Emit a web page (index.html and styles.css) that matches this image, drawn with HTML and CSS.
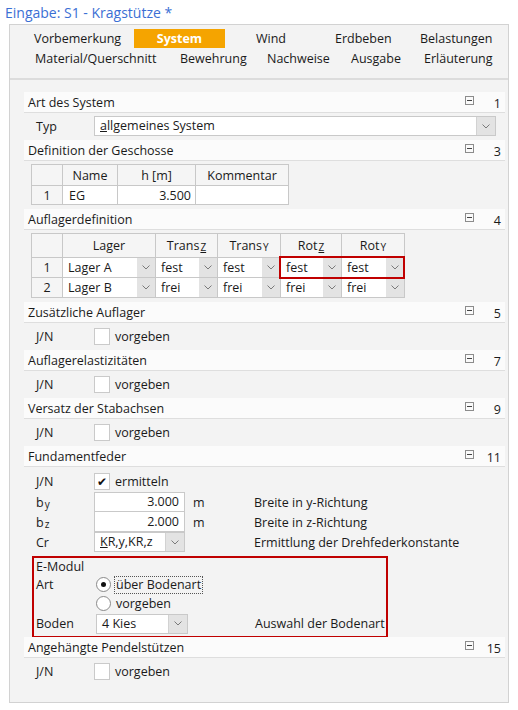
FILE: index.html
```html
<!DOCTYPE html>
<html lang="de">
<head>
<meta charset="utf-8">
<title>Eingabe: S1 - Kragstütze</title>
<link rel="stylesheet" href="styles.css">
</head>
<body>
<div class="title">Eingabe: S1 - Kragstütze *</div>
<div class="panel">
  <div class="tabs">
    <div class="tabrow r1">
      <span class="tab">Vorbemerkung</span>
      <span class="tab"><span class="active">System</span></span>
      <span class="tab">Wind</span>
      <span class="tab">Erdbeben</span>
      <span class="tab">Belastungen</span>
    </div>
    <div class="tabrow r2">
      <span class="tab">Material/Querschnitt</span>
      <span class="tab">Bewehrung</span>
      <span class="tab">Nachweise</span>
      <span class="tab">Ausgabe</span>
      <span class="tab">Erläuterung</span>
    </div>
  </div>
  <div class="content">
    <section class="sec first">
      <div class="sec-head"><span class="sec-title">Art des System</span><svg class="collapse" width="9" height="9" viewBox="0 0 9 9"><rect x="0.5" y="0.5" width="8" height="8" fill="#fafafa" stroke="#8c8c8c"/><path d="M2 4.5h5" stroke="#444"/></svg><span class="sec-num">1</span></div>
      <div class="sec-body">
        <div class="row"><span class="lbl">Typ</span>
          <div class="combo typ"><span class="val"><u>a</u>llgemeines System</span><span class="dd"><svg width="8" height="5" viewBox="0 0 8 5"><path d="M0.5 0.5L4 4L7.5 0.5" fill="none" stroke="#7a7a7a"/></svg></span></div>
        </div>
      </div>
    </section>

    <section class="sec">
      <div class="sec-head"><span class="sec-title">Definition der Geschosse</span><svg class="collapse" width="9" height="9" viewBox="0 0 9 9"><rect x="0.5" y="0.5" width="8" height="8" fill="#fafafa" stroke="#8c8c8c"/><path d="M2 4.5h5" stroke="#444"/></svg><span class="sec-num">3</span></div>
      <div class="sec-body">
        <table class="grid geschosse">
          <colgroup><col class="c-nr"><col class="c-name"><col class="c-h"><col class="c-komm"></colgroup>
          <tr class="hd"><th></th><th>Name</th><th>h [m]</th><th>Kommentar</th></tr>
          <tr class="dr"><td class="nr">1</td><td>EG</td><td class="num">3.500</td><td></td></tr>
        </table>
      </div>
    </section>

    <section class="sec">
      <div class="sec-head"><span class="sec-title">Auflagerdefinition</span><svg class="collapse" width="9" height="9" viewBox="0 0 9 9"><rect x="0.5" y="0.5" width="8" height="8" fill="#fafafa" stroke="#8c8c8c"/><path d="M2 4.5h5" stroke="#444"/></svg><span class="sec-num">4</span></div>
      <div class="sec-body">
        <div class="tablewrap">
          <table class="grid auflager">
            <colgroup><col class="c-nr"><col class="c-lager"><col class="c-dir"><col class="c-dir2"><col class="c-dir3"><col class="c-dir2"></colgroup>
            <tr class="hd"><th></th><th>Lager</th><th>Trans<span class="sub u">Z</span></th><th>Trans<span class="sub">Y</span></th><th>Rot<span class="sub u">Z</span></th><th>Rot<span class="sub">Y</span></th></tr>
            <tr class="dr"><td class="nr">1</td>
              <td><div class="cellsel"><span>Lager A</span><span class="dd"><svg width="8" height="5" viewBox="0 0 8 5"><path d="M0.5 0.5L4 4L7.5 0.5" fill="none" stroke="#7a7a7a"/></svg></span></div></td>
              <td><div class="cellsel"><span>fest</span><span class="dd"><svg width="8" height="5" viewBox="0 0 8 5"><path d="M0.5 0.5L4 4L7.5 0.5" fill="none" stroke="#7a7a7a"/></svg></span></div></td>
              <td><div class="cellsel"><span>fest</span><span class="dd"><svg width="8" height="5" viewBox="0 0 8 5"><path d="M0.5 0.5L4 4L7.5 0.5" fill="none" stroke="#7a7a7a"/></svg></span></div></td>
              <td><div class="cellsel"><span>fest</span><span class="dd"><svg width="8" height="5" viewBox="0 0 8 5"><path d="M0.5 0.5L4 4L7.5 0.5" fill="none" stroke="#7a7a7a"/></svg></span></div></td>
              <td><div class="cellsel"><span>fest</span><span class="dd"><svg width="8" height="5" viewBox="0 0 8 5"><path d="M0.5 0.5L4 4L7.5 0.5" fill="none" stroke="#7a7a7a"/></svg></span></div></td>
            </tr>
            <tr class="dr"><td class="nr">2</td>
              <td><div class="cellsel"><span>Lager B</span><span class="dd"><svg width="8" height="5" viewBox="0 0 8 5"><path d="M0.5 0.5L4 4L7.5 0.5" fill="none" stroke="#7a7a7a"/></svg></span></div></td>
              <td><div class="cellsel"><span>frei</span><span class="dd"><svg width="8" height="5" viewBox="0 0 8 5"><path d="M0.5 0.5L4 4L7.5 0.5" fill="none" stroke="#7a7a7a"/></svg></span></div></td>
              <td><div class="cellsel"><span>frei</span><span class="dd"><svg width="8" height="5" viewBox="0 0 8 5"><path d="M0.5 0.5L4 4L7.5 0.5" fill="none" stroke="#7a7a7a"/></svg></span></div></td>
              <td><div class="cellsel"><span>frei</span><span class="dd"><svg width="8" height="5" viewBox="0 0 8 5"><path d="M0.5 0.5L4 4L7.5 0.5" fill="none" stroke="#7a7a7a"/></svg></span></div></td>
              <td><div class="cellsel"><span>frei</span><span class="dd"><svg width="8" height="5" viewBox="0 0 8 5"><path d="M0.5 0.5L4 4L7.5 0.5" fill="none" stroke="#7a7a7a"/></svg></span></div></td>
            </tr>
          </table>
          <div class="highlight"></div>
        </div>
      </div>
    </section>

    <section class="sec">
      <div class="sec-head"><span class="sec-title">Zusätzliche Auflager</span><svg class="collapse" width="9" height="9" viewBox="0 0 9 9"><rect x="0.5" y="0.5" width="8" height="8" fill="#fafafa" stroke="#8c8c8c"/><path d="M2 4.5h5" stroke="#444"/></svg><span class="sec-num">5</span></div>
      <div class="sec-body">
        <div class="row"><span class="lbl">J/N</span><span class="check"></span><span class="chk-text">vorgeben</span></div>
      </div>
    </section>

    <section class="sec">
      <div class="sec-head"><span class="sec-title">Auflagerelastizitäten</span><svg class="collapse" width="9" height="9" viewBox="0 0 9 9"><rect x="0.5" y="0.5" width="8" height="8" fill="#fafafa" stroke="#8c8c8c"/><path d="M2 4.5h5" stroke="#444"/></svg><span class="sec-num">7</span></div>
      <div class="sec-body">
        <div class="row"><span class="lbl">J/N</span><span class="check"></span><span class="chk-text">vorgeben</span></div>
      </div>
    </section>

    <section class="sec">
      <div class="sec-head"><span class="sec-title">Versatz der Stabachsen</span><svg class="collapse" width="9" height="9" viewBox="0 0 9 9"><rect x="0.5" y="0.5" width="8" height="8" fill="#fafafa" stroke="#8c8c8c"/><path d="M2 4.5h5" stroke="#444"/></svg><span class="sec-num">9</span></div>
      <div class="sec-body">
        <div class="row"><span class="lbl">J/N</span><span class="check"></span><span class="chk-text">vorgeben</span></div>
      </div>
    </section>

    <section class="sec">
      <div class="sec-head"><span class="sec-title">Fundamentfeder</span><svg class="collapse" width="9" height="9" viewBox="0 0 9 9"><rect x="0.5" y="0.5" width="8" height="8" fill="#fafafa" stroke="#8c8c8c"/><path d="M2 4.5h5" stroke="#444"/></svg><span class="sec-num">11</span></div>
      <div class="sec-body fund">
        <div class="row tall"><span class="lbl">J/N</span><span class="check on">✔</span><span class="chk-text">ermitteln</span></div>
        <div class="frow"><span class="lbl">b<span class="sub">y</span></span><span class="input top">3.000</span><span class="unit">m</span><span class="desc">Breite in y-Richtung</span></div>
        <div class="frow"><span class="lbl">b<span class="sub">z</span></span><span class="input">2.000</span><span class="unit">m</span><span class="desc">Breite in z-Richtung</span></div>
        <div class="frow"><span class="lbl">Cr</span>
          <div class="combo small"><span class="val"><u>K</u>R,y,KR,z</span><span class="dd"><svg width="8" height="5" viewBox="0 0 8 5"><path d="M0.5 0.5L4 4L7.5 0.5" fill="none" stroke="#7a7a7a"/></svg></span></div>
          <span class="unit"></span><span class="desc">Ermittlung der Drehfederkonstante</span></div>
        <div class="emodul">
          <div class="em-title">E-Modul</div>
          <div class="erow"><span class="elbl">Art</span><span class="radio on"></span><span class="focus">über Bodenart</span></div>
          <div class="erow"><span class="elbl"></span><span class="radio"></span><span class="rtext">vorgeben</span></div>
          <div class="erow boden"><span class="elbl">Boden</span>
            <div class="combo small"><span class="val">4 Kies</span><span class="dd"><svg width="8" height="5" viewBox="0 0 8 5"><path d="M0.5 0.5L4 4L7.5 0.5" fill="none" stroke="#7a7a7a"/></svg></span></div>
            <span class="edesc">Auswahl der Bodenart</span></div>
        </div>
      </div>
    </section>

    <section class="sec pendel">
      <div class="sec-head"><span class="sec-title">Angehängte Pendelstützen</span><svg class="collapse" width="9" height="9" viewBox="0 0 9 9"><rect x="0.5" y="0.5" width="8" height="8" fill="#fafafa" stroke="#8c8c8c"/><path d="M2 4.5h5" stroke="#444"/></svg><span class="sec-num">15</span></div>
      <div class="sec-body">
        <div class="row"><span class="lbl">J/N</span><span class="check"></span><span class="chk-text">vorgeben</span></div>
      </div>
    </section>
  </div>
</div>
</body>
</html>
```
FILE: styles.css
```css
* { box-sizing: border-box; }
body {
  margin: 0;
  background: #ffffff;
  font-family: "Open Sans", "Noto Sans", "DejaVu Sans", sans-serif;
  font-size: 12.5px;
  color: #1a1a1a;
}
.title {
  height: 24px;
  padding: 4px 0 0 5px;
  font-size: 14px;
  line-height: 18px;
  color: #3b6fd4;
}
.panel {
  margin-left: 9px;
  width: 500px;
  height: 679px;
  border: 1px solid #d2d2d2;
  background: #f3f3f3;
}
.tabs {
  padding: 4px 0 0 0;
  height: 55px;
  border-bottom: 2px solid #dcdcdc;
}
.tabrow {
  display: grid;
  height: 19px;
  align-items: center;
  line-height: 19px;
}
.tabrow.r1 {
  grid-template-columns: 100px 122px 79px 85px auto;
  padding-left: 24px;
}
.tabrow.r2 {
  grid-template-columns: 145px 87px 84px 73px auto;
  padding-left: 25px;
  margin-top: 1px;
}
.tab { white-space: nowrap; }
.active {
  display: block;
  width: 91px;
  height: 19px;
  background: #f5a400;
  color: #ffffff;
  font-weight: 700;
  text-align: center;
}
.content {
  padding: 12px 3px 0 14px;
}
.sec-head {
  display: flex;
  align-items: center;
  height: 21px;
  padding-left: 4px;
  background: #fbfbfb;
  border-bottom: 1px solid #dedede;
}
.sec-title { flex: 1; }
.collapse { margin-top: -3px; }
.sec-num {
  width: 31px;
  padding-right: 4px;
  padding-top: 3px;
  text-align: right;
}
.sec-body {
  padding: 3px 0 4px 0;
}
.sec-body.fund { padding-bottom: 0; }
.row {
  display: flex;
  align-items: center;
  height: 20px;
}
.row.tall { height: 22px; }
.lbl {
  width: 70px;
  padding-left: 12px;
  flex: none;
}
.combo {
  display: flex;
  height: 20px;
  background: #ffffff;
  border: 1px solid #c9c9c9;
}
.combo.typ { width: 402px; }
.combo.small { width: 92px; }
.combo .val {
  flex: 1;
  padding-left: 5px;
  line-height: 18px;
  white-space: nowrap;
}
.dd {
  width: 19px;
  flex: none;
  display: flex;
  align-items: center;
  justify-content: center;
  background: #e3e3e3;
  border-left: 1px solid #d2d2d2;
}
.grid {
  border-collapse: collapse;
  margin-left: 7px;
  table-layout: fixed;
}
.grid th, .grid td {
  border: 1px solid #c8c8c8;
  padding: 0;
  font-weight: 400;
}
.grid th {
  background: #f5f5f5;
  text-align: center;
}
.grid td { background: #ffffff; }
.grid td.nr { background: #f5f5f5; text-align: center; }
.geschosse .hd { height: 21px; }
.geschosse .dr { height: 19px; }
.geschosse td { padding-left: 6px; }
.geschosse td.nr { padding-left: 0; }
.geschosse td.num { text-align: right; padding-right: 4px; }
.c-nr { width: 31px; }
.c-name { width: 55px; }
.c-h { width: 78px; }
.c-komm { width: 93px; }
.c-lager { width: 93px; }
.c-dir { width: 62px; }
.c-dir2 { width: 63px; }
.c-dir3 { width: 61px; }
.auflager .hd { height: 24px; }
.auflager .dr { height: 20px; }
.sub { font-size: 10px; vertical-align: -1px; margin-left: 1px; }
.sub.u { text-decoration: underline; }
.cellsel {
  display: flex;
  height: 19px;
}
.cellsel span:first-child {
  flex: 1;
  padding-left: 5px;
  line-height: 19px;
  white-space: nowrap;
}
.cellsel .dd { width: 18px; border-left: none; }
.tablewrap { position: relative; }
.highlight {
  position: absolute;
  left: 255px;
  top: 23px;
  width: 126px;
  height: 23px;
  border: 2px solid #c00000;
}
.check {
  width: 16px;
  height: 17px;
  flex: none;
  background: #ffffff;
  border: 1px solid #cacaca;
  font-size: 12px;
  line-height: 15px;
  text-align: center;
  color: #111;
}
.chk-text { margin-left: 5px; }
.frow {
  display: flex;
  align-items: center;
  height: 20px;
}
.input {
  width: 91px;
  height: 20px;
  flex: none;
  background: #ffffff;
  border: 1px solid #c9c9c9;
  border-top: none;
  text-align: right;
  padding-right: 5px;
  line-height: 19px;
}
.input.top { border-top: 1px solid #c9c9c9; line-height: 18px; }
.unit {
  width: 69px;
  flex: none;
  padding-left: 8px;
}
.frow .combo.small { width: 91px; }
.desc { white-space: nowrap; }
.emodul {
  margin: 4px 0 0 8px;
  width: 356px;
  height: 82px;
  border: 2px solid #c00000;
  padding: 0 0 0 2px;
}
.em-title { height: 17px; line-height: 17px; }
.erow {
  display: flex;
  align-items: center;
  height: 19px;
}
.erow.boden { height: 21px; }
.elbl { width: 60px; flex: none; }
.radio {
  width: 15px;
  height: 15px;
  flex: none;
  border-radius: 50%;
  border: 1px solid #8a8a8a;
  background: #ffffff;
  position: relative;
}
.radio.on::after {
  content: "";
  position: absolute;
  left: 4px;
  top: 4px;
  width: 5px;
  height: 5px;
  border-radius: 50%;
  background: #111;
}
.focus {
  margin-left: 3px;
  padding: 0 1px;
  border: 1px dotted #555;
  line-height: 16px;
}
.rtext { margin-left: 5px; }
.edesc { margin-left: 67px; white-space: nowrap; }
.pendel { margin-top: -1px; }
.pendel .sec-body { padding-top: 3px; }
```
